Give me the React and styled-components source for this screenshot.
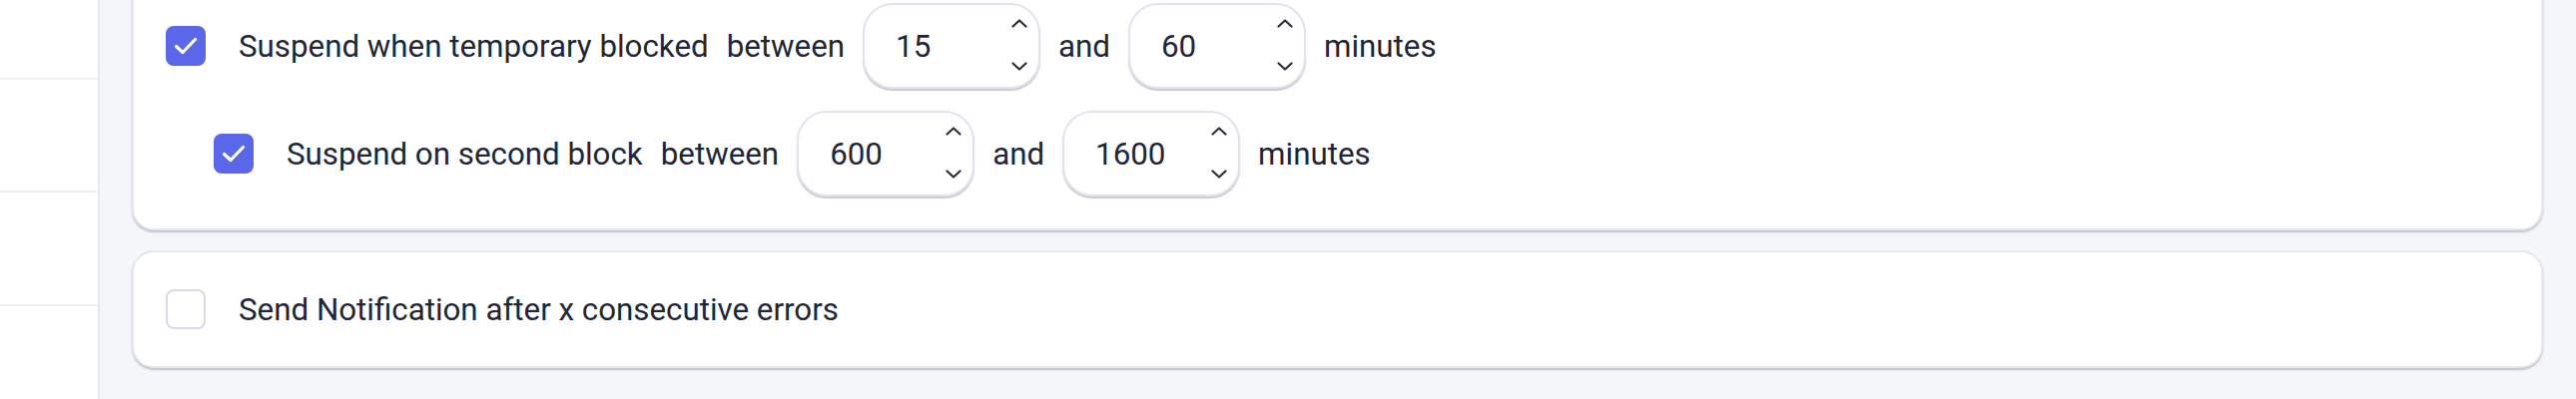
import React from "react";
import styled, { createGlobalStyle } from "styled-components";

const Global = createGlobalStyle`
  html, body {
    margin: 0;
    padding: 0;
    background: #f5f6fa;
    font-family: Roboto, "Liberation Sans", sans-serif;
    overflow: hidden;
  }
  * { box-sizing: border-box; }
`;

const Layout = styled.div`
  display: flex;
  height: 400px;
  overflow: hidden;
`;

const Sidebar = styled.aside`
  width: 100px;
  flex-shrink: 0;
  background: #ffffff;
  border-right: 2px solid #e7e9f1;
  display: flex;
  flex-direction: column;
  margin-top: -34px;
`;

const SideItem = styled.div`
  height: 113.5px;
  flex-shrink: 0;
  border-bottom: 2px solid #eef0f5;
`;

const Main = styled.main`
  flex: 1;
  display: flex;
  flex-direction: column;
  gap: 20px;
  padding: 0 33px 0 32px;
  margin-top: -33px;
`;

const Card = styled.section`
  background: #ffffff;
  border: 2px solid #e5e8f1;
  border-radius: 22px;
  box-shadow: 0 2px 2px rgba(60, 64, 80, 0.28);
  padding: ${(p) => p.$pad};
  display: flex;
  flex-direction: column;
  gap: 22px;
`;

const Row = styled.div`
  display: flex;
  align-items: center;
  gap: 18px;
  padding-left: ${(p) => p.$indent || 0}px;
`;

const CheckLabel = styled.label`
  display: flex;
  align-items: center;
  gap: 33px;
`;

const Box = styled.span`
  width: 40px;
  height: 40px;
  flex-shrink: 0;
  border-radius: 8px;
  display: flex;
  align-items: center;
  justify-content: center;
  background: ${(p) => (p.$checked ? "#5a67e9" : "#ffffff")};
  border: ${(p) => (p.$checked ? "none" : "2px solid #d5d9ea")};
`;

const Text = styled.span`
  font-size: 31.3px;
  color: #1f2637;
  white-space: nowrap;
  line-height: 1.2;
  margin-top: 2px;
`;

const NumberBox = styled.div`
  width: 178px;
  height: 86px;
  flex-shrink: 0;
  border: 2px solid #e0e4ef;
  border-radius: 30px;
  box-shadow: 0 2px 1px rgba(60, 64, 80, 0.28);
  background: #fff;
  display: flex;
  align-items: center;
  padding: 14px 11px 16px 31px;
`;

const Value = styled.span`
  flex: 1;
  font-size: 31.3px;
  color: #1f2637;
  margin-top: 2px;
`;

const Spinner = styled.div`
  align-self: stretch;
  display: flex;
  flex-direction: column;
  justify-content: space-between;
`;

function Check({ checked }) {
  return (
    <Box $checked={checked}>
      {checked && (
        <svg width="40" height="40" viewBox="0 0 40 40">
          <path
            d="M10.5 20.5 L17 26.5 L29.5 13.5"
            fill="none"
            stroke="#fff"
            strokeWidth="3.2"
            strokeLinecap="round"
            strokeLinejoin="round"
          />
        </svg>
      )}
    </Box>
  );
}

function Chevron({ up }) {
  return (
    <svg width="16" height="9" viewBox="0 0 16 9">
      <path
        d={up ? "M1.5 7.5 L8 1.5 L14.5 7.5" : "M1.5 1.5 L8 7.5 L14.5 1.5"}
        fill="none"
        stroke="#2b2f38"
        strokeWidth="2.2"
        strokeLinecap="round"
        strokeLinejoin="round"
      />
    </svg>
  );
}

function NumberInput({ value }) {
  return (
    <NumberBox>
      <Value>{value}</Value>
      <Spinner>
        <Chevron up />
        <Chevron />
      </Spinner>
    </NumberBox>
  );
}

export default function App() {
  return (
    <>
      <Global />
      <Layout>
        <Sidebar>
          <SideItem />
          <SideItem />
          <SideItem />
          <SideItem />
        </Sidebar>
        <Main>
          <Card $pad="34px 32px 32px">
            <Row>
              <CheckLabel>
                <Check checked />
                <Text>Suspend when temporary blocked</Text>
              </CheckLabel>
              <Text>between</Text>
              <NumberInput value="15" />
              <Text>and</Text>
              <NumberInput value="60" />
              <Text>minutes</Text>
            </Row>
            <Row $indent={48}>
              <CheckLabel>
                <Check checked />
                <Text>Suspend on second block</Text>
              </CheckLabel>
              <Text>between</Text>
              <NumberInput value="600" />
              <Text>and</Text>
              <NumberInput value="1600" />
              <Text>minutes</Text>
            </Row>
          </Card>
          <Card $pad="37px 32px 37px">
            <Row>
              <CheckLabel>
                <Check />
                <Text>Send Notification after x consecutive errors</Text>
              </CheckLabel>
            </Row>
          </Card>
        </Main>
      </Layout>
    </>
  );
}
